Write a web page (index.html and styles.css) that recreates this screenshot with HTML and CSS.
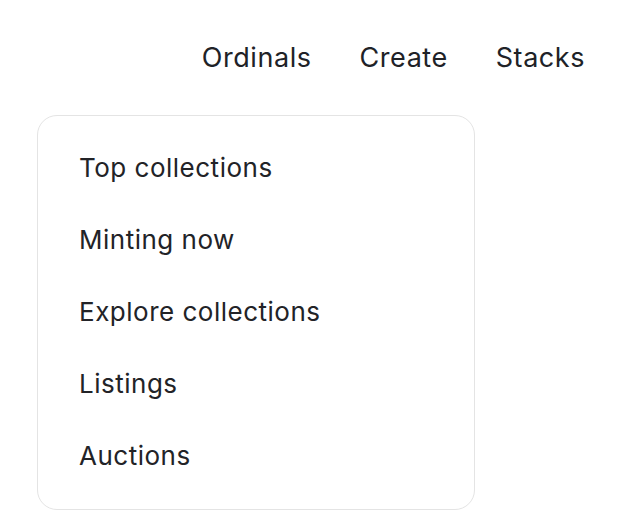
FILE: index.html
```html
<!DOCTYPE html>
<html>
<head>
<meta charset="utf-8">
<link rel="stylesheet" href="styles.css">
</head>
<body>
<nav class="topnav">
  <a class="navlink">Ordinals</a>
  <a class="navlink">Create</a>
  <a class="navlink">Stacks</a>
</nav>
<div class="menu">
  <div class="item">Top collections</div>
  <div class="item">Minting now</div>
  <div class="item">Explore collections</div>
  <div class="item">Listings</div>
  <div class="item">Auctions</div>
</div>
</body>
</html>
```
FILE: styles.css
```css
html, body {
  margin: 0;
  padding: 0;
  background: #ffffff;
}
body {
  font-family: Inter, "Noto Sans", sans-serif;
  color: #222327;
  width: 624px;
  height: 532px;
}
.topnav {
  display: flex;
  justify-content: flex-end;
  gap: 48px;
  padding: 38px 39px 0 0;
  height: 39px;
  align-items: center;
}
.navlink {
  font-size: 27px;
  line-height: 39px;
  letter-spacing: 0.55px;
  font-weight: 400;
  color: #202227;
}
.menu {
  margin: 38px 0 0 37px;
  width: 438px;
  box-sizing: border-box;
  border: 1px solid #e4e4e4;
  border-radius: 20px;
  padding: 16px 0 17px;
}
.item {
  height: 72px;
  line-height: 72px;
  padding-left: 41px;
  font-size: 26px;
  letter-spacing: 0.5px;
}
```
